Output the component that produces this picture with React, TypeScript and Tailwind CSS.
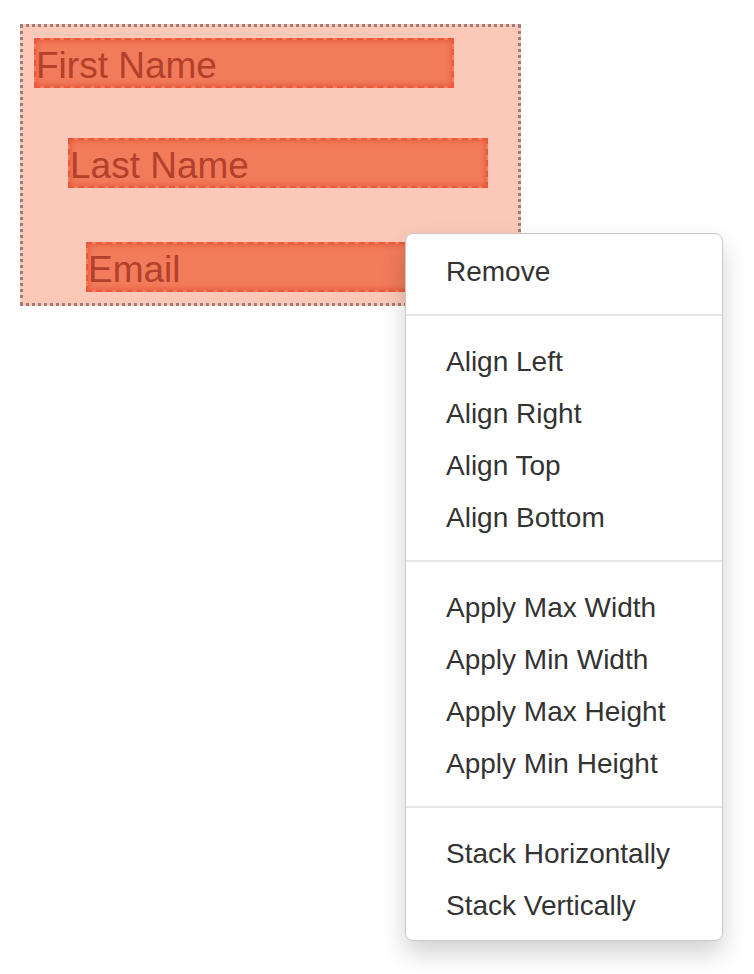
import React from "react";

const groups = [
  ["Remove"],
  ["Align Left", "Align Right", "Align Top", "Align Bottom"],
  ["Apply Max Width", "Apply Min Width", "Apply Max Height", "Apply Min Height"],
  ["Stack Horizontally", "Stack Vertically"],
];

function Field({ label, className }: { label: string; className: string }) {
  return (
    <div
      className={
        "h-[50px] w-[420px] flex items-center pt-[4px] pl-0 border-2 border-dashed border-[#e9593c] bg-[#f27b5b] shadow-[inset_0_0_6px_rgba(220,60,30,0.6)] text-[37px] leading-none text-[#b3402a] " +
        className
      }
      style={{ fontFamily: '"Liberation Sans", Arial, sans-serif' }}
    >
      {label}
    </div>
  );
}

export default function App() {
  return (
    <div className="relative w-[754px] h-[974px] bg-white" style={{ fontFamily: '"Liberation Sans", Arial, sans-serif' }}>
      <div className="pt-[24px] pl-[20px]">
        <div className="w-[501px] h-[282px] border-[3px] border-dotted border-[#9e7c79] bg-[#fcc9b8] pt-[11px] pl-[11px] flex flex-col">
          <Field label="First Name" className="" />
          <Field label="Last Name" className="ml-[34px] mt-[50px]" />
          <Field label="Email" className="ml-[52px] mt-[54px]" />
        </div>
      </div>

      <div className="absolute left-[405px] top-[233px] w-[318px] rounded-[8px] border border-[#c9c9c9] bg-white py-[10px] shadow-[0_12px_24px_rgba(0,0,0,0.18)]">
        {groups.map((g, gi) => (
          <div key={gi}>
            {gi > 0 && <div className="my-[18px] h-[2px] bg-[#e5e5e5]" />}
            {g.map((item) => (
              <div key={item} className="h-[52px] flex items-center pt-[3px] pl-[40px] text-[28px] text-[#333333]">
                {item}
              </div>
            ))}
          </div>
        ))}
      </div>
    </div>
  );
}
